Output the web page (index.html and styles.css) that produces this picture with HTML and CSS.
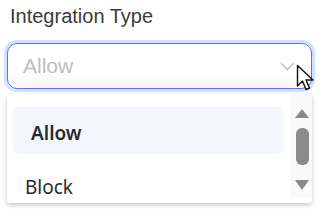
FILE: index.html
```html
<!DOCTYPE html>
<html lang="en">
<head>
    <meta charset="UTF-8">
    <meta name="viewport" content="width=device-width, initial-scale=1.0">
    <title>Integration Type</title>
    <link rel="stylesheet" href="styles.css">
</head>
<body>
    <div class="field">
        <label class="field-label">Integration Type</label>

        <div class="select">
            <span class="placeholder">Allow</span>
            <svg class="chevron" width="15" height="9" viewBox="0 0 15 9">
                <path d="M1 1 L7.5 7.5 L14 1" fill="none" stroke="#c4c4c4" stroke-width="1.6"/>
            </svg>
            <!-- mouse pointer sitting over the select -->
            <svg class="pointer" width="19" height="28" viewBox="0 0 19 28">
                <path d="M1.5 1.5 L1.5 22 L6.5 17 L10 25.5 L13.5 24 L10 16 L17 16 Z" fill="#fff" stroke="#111" stroke-width="1.4" stroke-linejoin="round"/>
            </svg>
        </div>

        <div class="dropdown">
            <ul class="options">
                <li class="option active">Allow</li>
                <li class="option">Block</li>
            </ul>
            <div class="scrollbar">
                <span class="arrow up"></span>
                <span class="thumb"></span>
                <span class="arrow down"></span>
            </div>
        </div>
    </div>
</body>
</html>
```

FILE: styles.css
```css
*{
    padding: 0;
    margin: 0;
    box-sizing: border-box;
}
body{
    background-color: #fff;
    width: 328px;
    height: 209px;
    overflow: hidden;
}

.field{
    padding: 5px 16px 0 7px;
}

.field-label{
    display: block;
    padding-left: 3px;
    font-family: "Liberation Sans", Arial, sans-serif;
    font-size: 20px;
    line-height: 23px;
    color: #3a3a3a;
}

.select{
    position: relative;
    margin-top: 15px;
    height: 46px;
    border: 1px solid #6e6ddb;
    border-radius: 10px;
    box-shadow: 0 0 0 3px #cfe1fd;
    background: linear-gradient(#fff, #fff 60%, #f6f6f6);
    display: flex;
    align-items: center;
    justify-content: space-between;
    padding: 0 16px 0 15px;
}

.placeholder{
    font-family: "Liberation Sans", Arial, sans-serif;
    font-size: 21px;
    color: #bdbdbd;
}

.chevron{
    margin-top: 1px;
}

.pointer{
    position: absolute;
    left: 288px;
    top: 20px;
}

.dropdown{
    margin-top: 5px;
    height: 109px;
    background: #fff;
    border-radius: 2px;
    box-shadow: 0 2px 5px rgba(0, 0, 0, 0.22);
    display: flex;
    justify-content: space-between;
    overflow: hidden;
}

.options{
    list-style: none;
    padding: 13px 0 0 5px;
    font-family: "Noto Sans", sans-serif;
    font-size: 19px;
    color: #2a2a2a;
}

.option{
    width: 272px;
    height: 47px;
    line-height: 52px;
    padding-left: 13px;
}

.option.active{
    background-color: #f3f7fd;
    border-radius: 7px;
    font-weight: 600;
    padding-left: 19px;
    margin-bottom: 7px;
}

.scrollbar{
    width: 22px;
    height: 103px;
    background-color: #f9f9f9;
    display: flex;
    flex-direction: column;
    align-items: center;
    padding: 15px 0 0 2px;
}

.arrow{
    width: 0;
    height: 0;
    border-left: 7px solid transparent;
    border-right: 7px solid transparent;
}
.arrow.up{
    border-bottom: 9px solid #8a8a8a;
}
.arrow.down{
    border-top: 10px solid #8a8a8a;
}

.thumb{
    width: 13px;
    height: 37px;
    margin: 10px 0 15px;
    border-radius: 6px;
    background-color: #8a8a8a;
}
```
